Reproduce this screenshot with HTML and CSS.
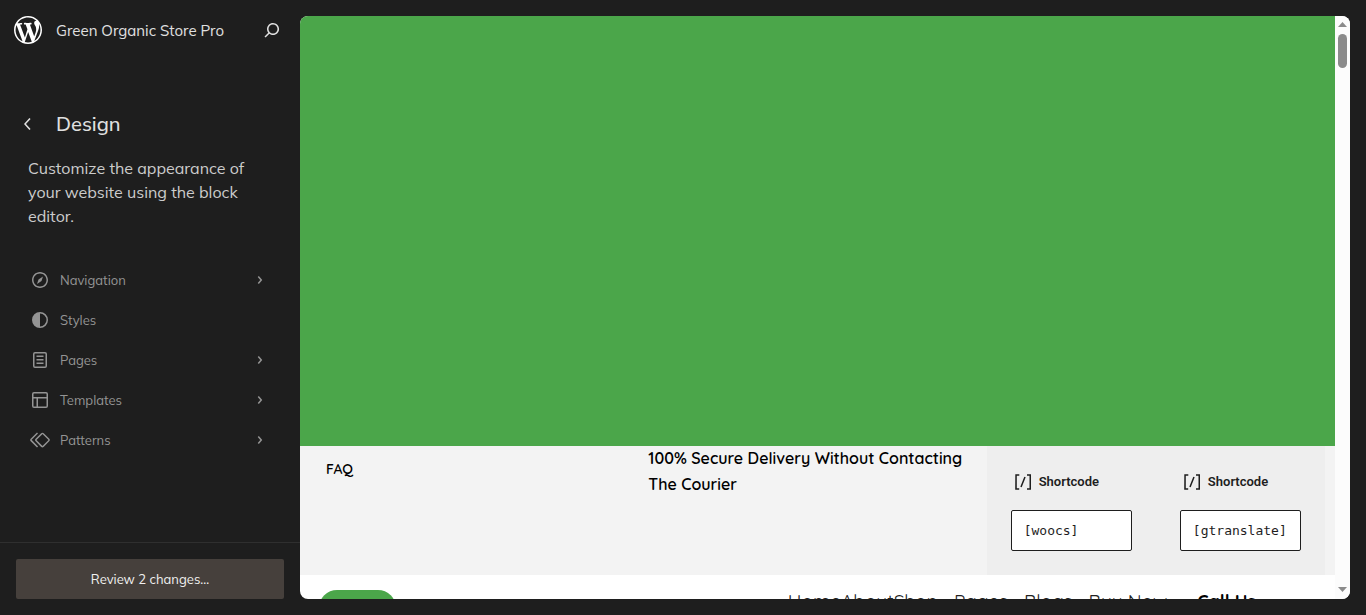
FILE: index.html
```html
<!DOCTYPE html>
<html lang="en">
    <head>
        <meta charset="utf-8">
        <meta name="viewport" content="width=device-width, initial-scale=1.0">
        <title>Design</title>
        <link rel="stylesheet" href="styles.css">
    </head>
    <body>
        <div class="layout">
            <aside class="sidebar">
                <header class="site-hub">
                    <a class="logo" href="#" aria-label="Dashboard">
                        <svg viewBox="0 0 20 20" width="28" height="28"><path d="M20 10c0-5.51-4.49-10-10-10C4.48 0 0 4.49 0 10c0 5.52 4.48 10 10 10 5.51 0 10-4.48 10-10zM7.78 15.37L4.37 6.22c.55-.02 1.17-.08 1.17-.08.5-.06.44-1.13-.06-1.11 0 0-1.45.11-2.37.11-.18 0-.37 0-.58-.01C4.12 2.69 6.87 1.11 10 1.11c2.33 0 4.45.87 6.05 2.34-.68-.11-1.65.39-1.65 1.58 0 .74.45 1.36.9 2.1.35.61.55 1.36.55 2.46 0 1.49-1.4 5-1.4 5l-3.03-8.37c.54-.02.82-.17.82-.17.5-.05.44-1.25-.06-1.22 0 0-1.44.12-2.38.12-.87 0-2.33-.12-2.33-.12-.5-.03-.56 1.2-.06 1.22l.92.08 1.26 3.41zM17.41 10c.24-.64.74-1.87.43-4.25.7 1.29 1.05 2.71 1.05 4.25 0 3.29-1.73 6.24-4.4 7.78.97-2.59 1.94-5.2 2.92-7.78zM6.1 18.09C3.12 16.65 1.11 13.53 1.11 10c0-1.3.23-2.48.72-3.59C3.25 10.3 4.67 14.2 6.1 18.09zm4.03-6.63l2.58 6.98c-.86.29-1.76.45-2.71.45-.79 0-1.57-.11-2.29-.33.81-2.38 1.62-4.74 2.42-7.1z"/></svg>
                    </a>
                    <a class="site-title" href="#">Green Organic Store Pro</a>
                    <button class="icon-button" type="button" aria-label="Search">
                        <svg viewBox="0 0 24 24" width="24" height="24"><path d="M13 5c-3.3 0-6 2.7-6 6 0 1.4.5 2.7 1.3 3.7l-3.8 3.8 1.1 1.1 3.8-3.8c1 .8 2.3 1.3 3.7 1.3 3.3 0 6-2.7 6-6S16.3 5 13 5zm0 10.5c-2.5 0-4.5-2-4.5-4.5s2-4.5 4.5-4.5 4.5 2 4.5 4.5-2 4.5-4.5 4.5z"/></svg>
                    </button>
                </header>

                <div class="panel">
                    <div class="panel-title">
                        <button class="icon-button" type="button" aria-label="Back">
                            <svg viewBox="0 0 24 24" width="24" height="24"><path d="M14.6 7l-1.2-1L8 12l5.4 6 1.2-1-4.6-5z"/></svg>
                        </button>
                        <h1>Design</h1>
                    </div>
                    <p class="description">Customize the appearance of your website using the block editor.</p>
                    <nav class="menu">
                        <a href="#">
                            <svg viewBox="0 0 24 24" width="24" height="24"><path d="M12 4c-4.4 0-8 3.6-8 8s3.6 8 8 8 8-3.6 8-8-3.6-8-8-8zm0 14.5c-3.6 0-6.5-2.9-6.5-6.5S8.4 5.5 12 5.5s6.5 2.9 6.5 6.5-2.9 6.5-6.5 6.5zM9 16l4.5-3L15 8.4l-4.5 3L9 16z"/></svg>
                            <span>Navigation</span>
                            <svg viewBox="0 0 24 24" width="24" height="24"><path d="M10.86 8.04l3.42 3.99-3.42 3.99-1.14-.98 2.58-3.01-2.58-3.01z"/></svg>
                        </a>
                        <a href="#">
                            <svg viewBox="0 0 24 24" width="24" height="24"><path fill-rule="evenodd" d="M20 12a8 8 0 1 1-16 0 8 8 0 0 1 16 0Zm-1.5 0a6.5 6.5 0 0 1-6.5 6.5v-13a6.5 6.5 0 0 1 6.5 6.5Z"/></svg>
                            <span>Styles</span>
                        </a>
                        <a href="#">
                            <svg viewBox="0 0 24 24" width="24" height="24"><path d="M15.5 7.5h-7V9h7V7.5Zm-7 3.5h7v1.5h-7V11Zm7 3.5h-7V16h7v-1.5Z"/><path fill-rule="evenodd" d="M17 4H7a2 2 0 0 0-2 2v12a2 2 0 0 0 2 2h10a2 2 0 0 0 2-2V6a2 2 0 0 0-2-2ZM7 5.5h10a.5.5 0 0 1 .5.5v12a.5.5 0 0 1-.5.5H7a.5.5 0 0 1-.5-.5V6a.5.5 0 0 1 .5-.5Z"/></svg>
                            <span>Pages</span>
                            <svg viewBox="0 0 24 24" width="24" height="24"><path d="M10.86 8.04l3.42 3.99-3.42 3.99-1.14-.98 2.58-3.01-2.58-3.01z"/></svg>
                        </a>
                        <a href="#">
                            <svg viewBox="0 0 24 24" width="24" height="24"><path fill-rule="evenodd" d="M18 5.5H6a.5.5 0 0 0-.5.5v3h13V6a.5.5 0 0 0-.5-.5zm.5 5H10v8h8a.5.5 0 0 0 .5-.5v-7.5zm-10 0h-3V18a.5.5 0 0 0 .5.5h2.5v-8zM6 4h12a2 2 0 0 1 2 2v12a2 2 0 0 1-2 2H6a2 2 0 0 1-2-2V6a2 2 0 0 1 2-2z"/></svg>
                            <span>Templates</span>
                            <svg viewBox="0 0 24 24" width="24" height="24"><path d="M10.86 8.04l3.42 3.99-3.42 3.99-1.14-.98 2.58-3.01-2.58-3.01z"/></svg>
                        </a>
                        <a href="#">
                            <svg viewBox="0 0 24 24" width="24" height="24"><path d="M21.3 10.8l-5.6-5.6c-.7-.7-1.8-.7-2.5 0l-5.6 5.6c-.7.7-.7 1.8 0 2.5l5.6 5.6c.3.3.8.5 1.2.5s.9-.2 1.2-.5l5.6-5.6c.8-.7.8-1.9.1-2.5zm-1 1.4l-5.6 5.6c-.1.1-.3.1-.4 0l-5.6-5.6c-.1-.1-.1-.3 0-.4l5.6-5.6s.1-.1.2-.1.1 0 .2.1l5.6 5.6c.1.1.1.3 0 .4zm-16.6-.4L10 5.5l-1-1-6.3 6.3c-.7.7-.7 1.8 0 2.5L9 19.5l1.1-1.1-6.3-6.3c-.2 0-.2-.2-.1-.3z"/></svg>
                            <span>Patterns</span>
                            <svg viewBox="0 0 24 24" width="24" height="24"><path d="M10.86 8.04l3.42 3.99-3.42 3.99-1.14-.98 2.58-3.01-2.58-3.01z"/></svg>
                        </a>
                    </nav>
                </div>

                <footer class="save-hub">
                    <button class="review" type="button">Review 2 changes…</button>
                </footer>
            </aside>

            <main class="canvas">
                <div class="page">
                    <div class="banner"></div>
                    <div class="topbar">
                        <a class="faq" href="#">FAQ</a>
                        <p class="notice">100% Secure Delivery Without Contacting The Courier</p>
                        <div class="shortcodes">
                            <div class="shortcode">
                                <label for="woocs">
                                    <svg viewBox="0 0 24 24" width="24" height="24"><path d="M16 4.2v1.5h2.5v12.5H16v1.5h4V4.2h-4zM4.2 19.8h4v-1.5H5.8V5.8h2.5V4.2h-4l-.1 15.6zm5.1-3.1l1.4.6 4-10-1.4-.6-4 10z"/></svg>
                                    Shortcode
                                </label>
                                <input id="woocs" type="text" value="[woocs]">
                            </div>
                            <div class="shortcode">
                                <label for="gtranslate">
                                    <svg viewBox="0 0 24 24" width="24" height="24"><path d="M16 4.2v1.5h2.5v12.5H16v1.5h4V4.2h-4zM4.2 19.8h4v-1.5H5.8V5.8h2.5V4.2h-4l-.1 15.6zm5.1-3.1l1.4.6 4-10-1.4-.6-4 10z"/></svg>
                                    Shortcode
                                </label>
                                <input id="gtranslate" type="text" value="[gtranslate]">
                            </div>
                        </div>
                    </div>
                    <div class="site-header">
                        <div class="site-logo"></div>
                        <nav class="site-nav">
                            <div class="links">
                                <a href="#">Home</a><a href="#">About</a><a href="#">Shop</a>
                            </div>
                            <a href="#">Pages</a>
                            <a href="#">Blogs</a>
                            <a href="#">Buy Now</a>
                        </nav>
                        <a class="call" href="#">Call Us</a>
                    </div>
                </div>
                <div class="scrollbar">
                    <svg viewBox="0 0 15 18" width="15" height="18"><path d="M3 11l4.5-5 4.5 5z"/></svg>
                    <div class="thumb"></div>
                    <svg viewBox="0 0 15 18" width="15" height="18"><path d="M3 6l4.500 5L12 6z"/></svg>
                </div>
            </main>
        </div>
    </body>
</html>
```
FILE: styles.css
```css
* {
    box-sizing: border-box;
}

body {
    margin: 0;
    background-color: #1e1e1e;
    color: #e0e0e0;
    font-family: Mulish, Muli, Lato, sans-serif;
    font-size: 13px;
    line-height: 1.4;
}

a {
    color: inherit;
    text-decoration: none;
}

button {
    border: 0;
    font-family: inherit;
    line-height: inherit;
    cursor: pointer;
}

svg {
    display: block;
    flex: none;
    fill: currentColor;
}

.layout {
    display: flex;
    height: 100vh;
}

.sidebar {
    display: flex;
    flex-direction: column;
    flex: 0 0 300px;
}

.site-hub {
    display: flex;
    align-items: center;
    height: 60px;
    padding: 0 16px 0 14px;
}

.logo {
    color: white;
}

.site-title {
    flex: 1;
    padding-left: 14px;
    font-size: 15px;
}

.icon-button {
    padding: 0;
    background: none;
    color: #e0e0e0;
}

.panel {
    flex: 1;
    padding: 48px 16px 0;
}

.panel-title {
    display: flex;
    align-items: center;
    gap: 16px;
    height: 32px;
}

.panel-title h1 {
    margin: 0;
    font-size: 20px;
    font-weight: 500;
    line-height: 20px;
}

.description {
    margin: 16px 16px 32px 12px;
    color: #ccc;
    font-size: 16px;
    line-height: 24px;
}

.menu {
    display: flex;
    flex-direction: column;
    padding: 0 12px;
    color: #949494;
}

.menu a {
    display: flex;
    align-items: center;
    gap: 8px;
    height: 40px;
}

.menu span {
    flex: 1;
}

.save-hub {
    padding: 16px;
    border-top: 1px solid #2f2f2f;
}

.review {
    display: block;
    width: 100%;
    height: 40px;
    border-radius: 2px;
    background-color: #46403c;
    color: #f0f0f0;
    font-size: 13px;
}

.canvas {
    display: flex;
    flex: 1;
    margin: 16px 16px 16px 0;
    border-radius: 8px;
    background-color: white;
    overflow: hidden;
}

.page {
    flex: 1;
    color: black;
    font-family: Quicksand, Lato, sans-serif;
}

.banner {
    height: 430px;
    background-color: #4ba64a;
}

.topbar {
    display: grid;
    grid-template-columns: repeat(3, 1fr);
    padding: 0 10px;
    background-color: #f3f3f3;
}

.faq {
    padding: 12px 16px;
    font-size: 14px;
    font-weight: 600;
    line-height: 22px;
}

.notice {
    margin: 0;
    font-size: 16px;
    font-weight: 600;
    line-height: 1.6;
}

.shortcodes {
    display: grid;
    grid-template-columns: 1fr 1fr;
    background-color: #eee;
}

.shortcode {
    display: flex;
    flex-direction: column;
    gap: 16px;
    padding: 24px;
}

.shortcode label {
    display: flex;
    align-items: center;
    gap: 4px;
    color: #1e1e1e;
    font-family: Roboto, sans-serif;
    font-size: 13px;
    font-weight: 600;
}

.shortcode input {
    width: 100%;
    height: 41px;
    padding: 12px;
    border: 1px solid #1e1e1e;
    border-radius: 2px;
    background-color: white;
    color: #1e1e1e;
    font-family: "DejaVu Sans Mono", monospace;
    font-size: 13px;
}

.site-header {
    display: flex;
    align-items: flex-start;
    padding: 15px 79px 0 19px;
    font-size: 18px;
    line-height: 24px;
}

.site-logo {
    width: 77px;
    height: 77px;
    margin-right: auto;
    border-radius: 18px;
    background-color: #4ba64a;
}

.site-nav {
    display: flex;
    gap: 16px;
    margin-right: 30px;
    color: #222;
    font-size: 19px;
    line-height: 22px;
}

.links {
    display: flex;
}

.call {
    font-weight: 700;
}

.scrollbar {
    display: flex;
    flex-direction: column;
    width: 15px;
    background-color: #fcfcfc;
    color: #8b8b8b;
}

.thumb {
    width: 9px;
    height: 34px;
    margin: 0 3px auto;
    border-radius: 5px;
    background-color: #8b8b8b;
}
```
